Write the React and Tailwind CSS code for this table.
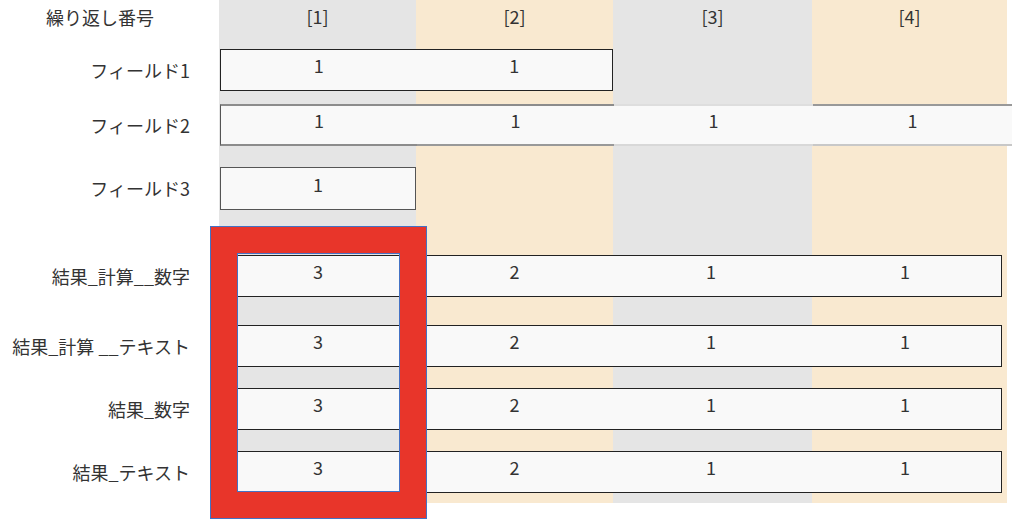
const repeats = ['[1]', '[2]', '[3]', '[4]']

const results = [
  { label: '結果_計算__数字', row: 'row-start-8', values: ['3', '2', '1', '1'] },
  { label: '結果_計算 __テキスト', row: 'row-start-10', values: ['3', '2', '1', '1'] },
  { label: '結果_数字', row: 'row-start-12', values: ['3', '2', '1', '1'] },
  { label: '結果_テキスト', row: 'row-start-14', values: ['3', '2', '1', '1'] },
]

function Label({ row, children }) {
  return (
    <div className={`${row} col-start-1 flex items-center justify-end pr-[29px] whitespace-nowrap`}>
      {children}
    </div>
  )
}

function Val({ children, className = '' }) {
  return <div className={`flex items-center justify-center pb-[9px] ${className}`}>{children}</div>
}

export default function App() {
  return (
    <div
      className="relative w-[1012px] h-[530px] bg-white text-[18px] text-[#333] overflow-hidden"
      style={{ fontFamily: '"Noto Sans CJK JP", "Noto Sans", sans-serif' }}
    >
      <div className="grid grid-cols-[219px_197px_197px_199px_195px_5px] grid-rows-[49px_42px_13px_42px_21px_43px_45px_42px_28px_42px_21px_42px_21px_42px_10px]">
        {/* column bands */}
        <div className="col-start-2 row-span-full bg-[#e5e5e5]" />
        <div className="col-start-3 row-span-full bg-[#f9e9d0]" />
        <div className="col-start-4 row-span-full bg-[#e5e5e5]" />
        <div className="col-start-5 row-span-full bg-[#f9e9d0]" />

        {/* header */}
        <div className="row-start-1 col-start-1 pl-[46px] pt-[4px] leading-[26px]">繰り返し番号</div>
        {repeats.map((r, i) => (
          <div
            key={r}
            className={`row-start-1 ${['col-start-2', 'col-start-3', 'col-start-4', 'col-start-5'][i]} text-center pt-[3px] leading-[26px]`}
          >
            {r}
          </div>
        ))}

        {/* フィールド1 */}
        <Label row="row-start-2">フィールド1</Label>
        <div className="row-start-2 col-start-2 col-end-4 ml-px grid grid-cols-2 border border-[#222] bg-[#f9f9f9]">
          <Val>1</Val>
          <Val>1</Val>
        </div>

        {/* フィールド2 */}
        <Label row="row-start-4">フィールド2</Label>
        <div className="row-start-4 col-start-2 col-end-7 ml-px flex bg-[#f9f9f9]">
          <Val className="w-[197px] border-l border-l-[#555] border-t-2 border-t-[#8c8c8c] border-b-2 border-b-[#8c8c8c]">1</Val>
          <Val className="w-[197px] border-t-2 border-t-[#8c8c8c] border-b-2 border-b-[#999]">1</Val>
          <Val className="w-[199px] border-t-2 border-t-[#dedede] border-b-2 border-b-[#d8d8d8]">1</Val>
          <Val className="flex-1 border-t-2 border-t-[#999] border-b-2 border-b-[#c8c8c8]">1</Val>
        </div>

        {/* フィールド3 */}
        <Label row="row-start-6">フィールド3</Label>
        <div className="row-start-6 col-start-2 ml-px flex border border-[#555] bg-[#f9f9f9]">
          <Val className="flex-1">1</Val>
        </div>

        {/* results */}
        {results.map((r) => (
          <div key={r.label} className="contents">
            <Label row={r.row}>{r.label}</Label>
            <div className={`${r.row} col-start-2 col-end-7 mr-[10px] grid grid-cols-[196px_197px_196px_1fr] border border-[#222] bg-[#f9f9f9]`}>
              {r.values.map((v, i) => (
                <Val key={i}>{v}</Val>
              ))}
            </div>
          </div>
        ))}
      </div>

      {/* highlight annotation */}
      <div className="absolute left-[211px] top-[227px] w-[215px] h-[291px] border-[26px] border-[#e8352a] outline outline-1 outline-[#4472c4] shadow-[inset_0_0_0_1px_#4472c4]" />
    </div>
  )
}
